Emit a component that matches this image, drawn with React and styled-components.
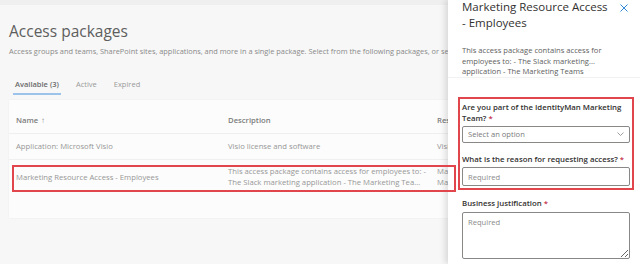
import React from 'react';
import styled, { createGlobalStyle } from 'styled-components';

const Global = createGlobalStyle`
  html, body { margin: 0; padding: 0; }
  body { font-family: "Open Sans", "Noto Sans", sans-serif; background: #f7f7f7; }
  * { box-sizing: border-box; }
`;

const Screen = styled.div`
  position: relative;
  display: flex;
  width: 640px;
  height: 264px;
  overflow: hidden;
`;

const Main = styled.main`
  width: 448px;
  flex: none;
  overflow: hidden;
  background: #f7f7f7;
  display: flex;
  flex-direction: column;
`;

const TopStrip = styled.div`
  height: 5px;
  flex: none;
  background: #efefef;
`;

const Header = styled.header`
  padding: 16px 0 0 9px;
`;

const PageTitle = styled.h1`
  margin: 0;
  font-size: 15.5px;
  line-height: 20px;
  font-weight: 400;
  color: #5e5e5e;
`;

const Subtitle = styled.p`
  margin: 5px 0 0;
  font-size: 7.4px;
  line-height: 10px;
  color: #8a8a8a;
  white-space: nowrap;
`;

const Tabs = styled.nav`
  display: flex;
  gap: 13px;
  margin: 19px 0 0 13px;
`;

const Tab = styled.div`
  height: 20px;
  padding: 0 2px;
  display: flex;
  align-items: center;
  font-size: 7.5px;
  color: ${p => (p.$active ? '#6a6a6a' : '#9a9a9a')};
  font-weight: ${p => (p.$active ? 600 : 400)};
  border-bottom: 2px solid ${p => (p.$active ? '#9cc3ea' : 'transparent')};
`;

const Card = styled.section`
  margin: 5px 0 0 9px;
  width: 540px;
  height: 118px;
  flex: none;
  background: #fcfcfc;
  box-shadow: 0 0 2px rgba(0, 0, 0, 0.05);
`;

const GridRow = styled.div`
  display: grid;
  grid-template-columns: 212px 209px 1fr;
  padding-left: 7px;
  font-size: 7.7px;
  line-height: 11px;
  white-space: nowrap;
`;

const HeaderRow = styled(GridRow)`
  height: 34px;
  align-items: end;
  padding-bottom: 7px;
  border-bottom: 1px solid #efefef;
  color: #7c7c7c;
  font-weight: 600;
`;

const Row = styled(GridRow)`
  height: ${p => (p.$tall ? 35 : 26)}px;
  align-items: center;
  color: #979797;
  border-bottom: 1px solid ${p => (p.$last ? 'transparent' : '#f0f0f0')};
`;

const Lines = styled.div`
  display: flex;
  flex-direction: column;
`;

const Arrow = styled.span`
  font-weight: 400;
  margin-left: 3px;
`;

const Panel = styled.aside`
  position: relative;
  z-index: 1;
  width: 192px;
  flex: none;
  background: #ffffff;
  box-shadow: -3px 0 6px rgba(0, 0, 0, 0.12);
  padding: 0 6px 0 10px;
  display: flex;
  flex-direction: column;
`;

const PanelHeader = styled.div`
  display: flex;
  justify-content: space-between;
  align-items: flex-start;
  padding-left: 4px;
`;

const PanelTitle = styled.h2`
  margin: -1px 0 0;
  width: 148px;
  font-size: 11.5px;
  line-height: 15.5px;
  font-weight: 400;
  color: #323130;
`;

const CloseButton = styled.button`
  border: 0;
  background: none;
  padding: 0;
  margin: 4px 6px 0 0;
  width: 8px;
  height: 8px;
  display: flex;
`;

const Description = styled.div`
  margin-top: 15px;
  padding-left: 4px;
  font-size: 7.6px;
  line-height: 10.7px;
  color: #605e5c;
  white-space: nowrap;
`;

const Divider = styled.div`
  margin: 0 -6px 0 -10px;
  border-bottom: 1px solid #f2f2f2;
`;

const Highlight = styled.div`
  margin-top: 19px;
  border: 2px solid #e0464b;
  padding: 3px 2px 2px;
`;

const Field = styled.div`
  display: flex;
  flex-direction: column;
  margin-top: ${p => p.$gap || 0}px;
  padding: ${p => (p.$inset ? '0 4px' : '0')};
`;

const Label = styled.label`
  font-size: 7.8px;
  line-height: 10.5px;
  font-weight: 600;
  color: #323130;
`;

const Star = styled.span`
  color: #c4314b;
`;

const Select = styled.div`
  margin-top: 2.5px;
  height: 17px;
  border: 1px solid #8a8886;
  border-radius: 2px;
  padding: 0 5px;
  display: flex;
  justify-content: space-between;
  align-items: center;
  font-size: 7.6px;
  color: #7a7a7a;
`;

const TextInput = styled.input`
  margin-top: 3px;
  height: 19px;
  width: 100%;
  border: 1px solid #8a8886;
  border-radius: 2px;
  padding: 0 5px;
  font-family: inherit;
  font-size: 7.6px;
  outline: none;
  &::placeholder { color: #8a8a8a; }
`;

const TextArea = styled.textarea`
  margin-top: 3px;
  height: 47px;
  width: 100%;
  border: 1px solid #8a8886;
  border-radius: 2px;
  padding: 4px 5px;
  font-family: inherit;
  font-size: 7.6px;
  outline: none;
  resize: vertical;
  &::placeholder { color: #8a8a8a; }
`;

const Annotation = styled.div`
  position: absolute;
  left: 12px;
  top: 165px;
  width: 444px;
  height: 27px;
  border: 2px solid #e0464b;
  z-index: 2;
  pointer-events: none;
`;

export default function App() {
  return (
    <Screen>
      <Global />
      <Main>
        <TopStrip />
        <Header>
          <PageTitle>Access packages</PageTitle>
          <Subtitle>
            Access groups and teams, SharePoint sites, applications, and more in a single package. Select from the following packages, or search to find what you're looking for.
          </Subtitle>
        </Header>
        <Tabs>
          <Tab $active>Available (3)</Tab>
          <Tab>Active</Tab>
          <Tab>Expired</Tab>
        </Tabs>
        <Card>
          <HeaderRow>
            <span>Name<Arrow>↑</Arrow></span>
            <span>Description</span>
            <span>Resources</span>
          </HeaderRow>
          <Row>
            <span>Application: Microsoft Visio</span>
            <span>Visio license and software</span>
            <span>Visio</span>
          </Row>
          <Row $tall $last>
            <span>Marketing Resource Access - Employees</span>
            <Lines>
              <span>This access package contains access for employees to: -</span>
              <span>The Slack marketing application - The Marketing Tea...</span>
            </Lines>
            <Lines>
              <span>Marketing</span>
              <span>Marketing</span>
            </Lines>
          </Row>
        </Card>
      </Main>
      <Panel>
        <PanelHeader>
          <PanelTitle>Marketing Resource Access - Employees</PanelTitle>
          <CloseButton aria-label="Close">
            <svg width="8" height="8" viewBox="0 0 8 8">
              <path d="M0.5 0.5 L7.5 7.5 M7.5 0.5 L0.5 7.5" stroke="#2b88d8" strokeWidth="1" fill="none" />
            </svg>
          </CloseButton>
        </PanelHeader>
        <Description>
          <div>This access package contains access for</div>
          <div>employees to: - The Slack marketing...</div>
          <div>application - The Marketing Teams</div>
        </Description>
        <Divider />
        <Highlight>
          <Field>
            <Label>Are you part of the IdentityMan Marketing Team? <Star>*</Star></Label>
            <Select>
              <span>Select an option</span>
              <svg width="7" height="4" viewBox="0 0 7 4">
                <path d="M0.5 0.5 L3.5 3.5 L6.5 0.5" stroke="#8a8886" strokeWidth="0.8" fill="none" />
              </svg>
            </Select>
          </Field>
          <Field $gap={11}>
            <Label>What is the reason for requesting access? <Star>*</Star></Label>
            <TextInput placeholder="Required" readOnly />
          </Field>
        </Highlight>
        <Field $gap={8} $inset>
          <Label>Business justification <Star>*</Star></Label>
          <TextArea placeholder="Required" readOnly />
        </Field>
      </Panel>
      <Annotation />
    </Screen>
  );
}
